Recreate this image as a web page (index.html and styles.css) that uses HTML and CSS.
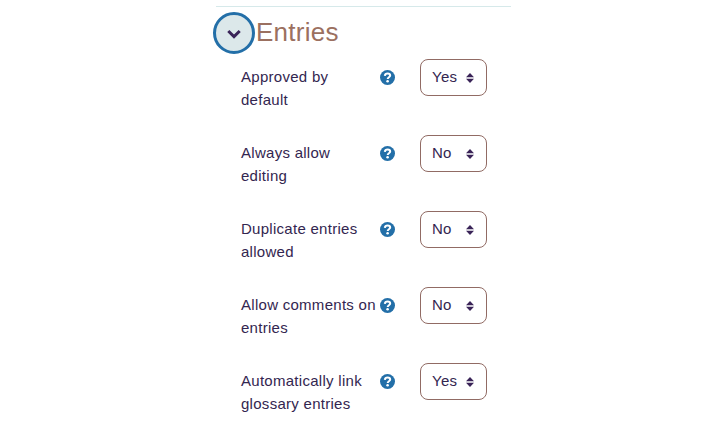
FILE: index.html
```html
<!DOCTYPE html>
<html lang="en">
<head>
<meta charset="utf-8">
<title>Entries</title>
<link rel="stylesheet" href="styles.css">
</head>
<body>
<svg width="0" height="0" class="defs">
  <symbol id="help" viewBox="0 0 14 14">
    <circle cx="7" cy="7" r="7" fill="#236fa8"/>
    <path d="M4.500 5.500C4.700 4 5.700 3.300 7.100 3.300c1.400 0 2.400.8 2.400 1.900 0 1.600-2.300 1.500-2.300 3.100" fill="none" stroke="#fff" stroke-width="1.900"/>
    <circle cx="7.100" cy="10.500" r="1.200" fill="#fff"/>
  </symbol>
  <symbol id="sort" viewBox="0 0 8 10">
    <path d="M4 0l4 4.200H0zM4 10L0 5.800h8z" fill="#3a2458"/>
  </symbol>
</svg>
<section class="panel">
  <header class="heading">
    <button class="toggle" aria-label="Collapse"><svg width="16" height="12" viewBox="0 0 16 12"><path d="M2.300 3L8 8.600 13.700 3" fill="none" stroke="#3a2458" stroke-width="3"/></svg></button>
    <h3 class="title">Entries</h3>
  </header>
  <div class="rows">
    <div class="row"><div class="label">Approved by<br>default</div><svg class="help"><use href="#help"/></svg><div class="select"><span>Yes</span><svg class="sort"><use href="#sort"/></svg></div></div>
    <div class="row"><div class="label">Always allow<br>editing</div><svg class="help"><use href="#help"/></svg><div class="select"><span>No</span><svg class="sort"><use href="#sort"/></svg></div></div>
    <div class="row"><div class="label">Duplicate entries<br>allowed</div><svg class="help"><use href="#help"/></svg><div class="select"><span>No</span><svg class="sort"><use href="#sort"/></svg></div></div>
    <div class="row"><div class="label">Allow comments on<br>entries</div><svg class="help"><use href="#help"/></svg><div class="select"><span>No</span><svg class="sort"><use href="#sort"/></svg></div></div>
    <div class="row"><div class="label">Automatically link<br>glossary entries</div><svg class="help"><use href="#help"/></svg><div class="select"><span>Yes</span><svg class="sort"><use href="#sort"/></svg></div></div>
  </div>
</section>
</body>
</html>
```
FILE: styles.css
```css
* { box-sizing: border-box; }
body {
  margin: 0;
  padding-top: 6px;
  background: #fff;
  color: #332650;
  font: 15px/23px "Liberation Sans", Arial, sans-serif;
  letter-spacing: 0.28px;
}
svg { display: block; flex: none; }
.defs { position: absolute; }
.panel {
  width: 295px;
  margin-left: 216px;
  border-top: 1px solid #d6e9ea;
}
.heading {
  display: flex;
  align-items: center;
  height: 52px;
  margin-left: -3px;
}
.toggle {
  display: flex;
  align-items: center;
  justify-content: center;
  width: 42px;
  height: 42px;
  padding: 0;
  border: 3px solid #236fa8;
  border-radius: 50%;
  background: #dce8ea;
}
.toggle svg { margin-top: 2px; margin-left: -1px; }
.title {
  margin: 0 0 2px 1px;
  color: #9b7060;
  font-size: 26px;
  font-weight: 400;
  line-height: 34px;
}
.rows { display: grid; row-gap: 24px; margin-left: 25px; }
.row {
  display: grid;
  grid-template-columns: 139px 40px 67px;
  height: 52px;
}
.label { padding-top: 6px; white-space: nowrap; }
.help { width: 15px; height: 15px; margin-top: 11px; }
.select {
  display: flex;
  align-items: center;
  justify-content: space-between;
  height: 37px;
  padding: 0 12px 0 11px;
  border: 1px solid #916b64;
  border-radius: 8px;
}
.select span { margin-bottom: 2px; }
.sort { width: 8px; height: 10px; margin-top: 1px; }
```
